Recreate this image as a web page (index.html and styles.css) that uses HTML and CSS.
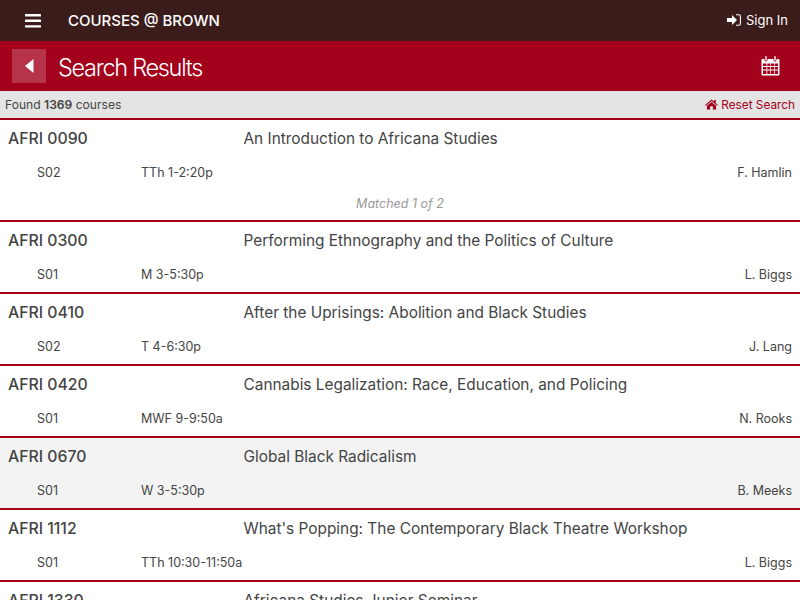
FILE: index.html
```html
<!DOCTYPE html>
<html lang="en">
<head>
<meta charset="utf-8">
<title>Courses @ Brown</title>
<link rel="stylesheet" href="styles.css">
</head>
<body>
<header class="topbar">
  <div class="brand">
    <svg class="burger" viewBox="0 0 16 14" width="16" height="14"><rect y="0" width="16" height="2.400" rx=".5"/><rect y="5.600" width="16" height="2.400" rx=".5"/><rect y="11.200" width="16" height="2.400" rx=".5"/></svg>
    <span class="title">COURSES @ BROWN</span>
  </div>
  <div class="signin">
    <svg viewBox="0 0 14 12" width="14" height="12"><path d="M0 4h5V1l5 5-5 5V8H0z" fill="#fff"/><path d="M9 .8h3a1.400 1.400 0 0 1 1.400 1.400v7.600A1.400 1.400 0 0 1 12 11.200H9" fill="none" stroke="#fff" stroke-width="1.100"/></svg>
    <span>Sign In</span>
  </div>
</header>
<section class="pagebar">
  <div class="pagebar-left">
    <div class="back"><svg viewBox="0 0 9 14" width="9" height="14"><path d="M8.500 0v14L0 7z" fill="#fff"/></svg></div>
    <h1>Search Results</h1>
  </div>
  <svg class="cal" viewBox="0 0 19 20" width="19" height="20"><path d="M1.500 3h16a1 1 0 0 1 1 1v14.500a1 1 0 0 1-1 1h-16a1 1 0 0 1-1-1V4a1 1 0 0 1 1-1z" fill="#fff"/><g fill="#a3001b"><rect x="2" y="7.500" width="3.500" height="2.500"/><rect x="6.300" y="7.500" width="3" height="2.500"/><rect x="10" y="7.500" width="3" height="2.500"/><rect x="13.700" y="7.500" width="3.300" height="2.500"/><rect x="2" y="11" width="3.500" height="2.500"/><rect x="6.300" y="11" width="3" height="2.500"/><rect x="10" y="11" width="3" height="2.500"/><rect x="13.700" y="11" width="3.300" height="2.500"/><rect x="2" y="14.500" width="3.500" height="3.500"/><rect x="6.300" y="14.500" width="3" height="3.500"/><rect x="10" y="14.500" width="3" height="3.500"/><rect x="13.700" y="14.500" width="3.300" height="3.500"/><rect x="3.500" y="1" width="3" height="4.500" rx="1.500"/><rect x="12.500" y="1" width="3" height="4.500" rx="1.500"/></g><rect x="4.300" y="0" width="1.400" height="4.800" rx=".7" fill="#fff"/><rect x="13.300" y="0" width="1.400" height="4.800" rx=".7" fill="#fff"/></svg>
</section>
<section class="found">
  <div>Found <b>1369</b> courses</div>
  <div class="reset">
    <svg viewBox="0 0 14 12" width="13" height="11"><path d="M7 .5 0 6.500l.8.9L7 2.200l6.200 5.200.8-.9-2.300-2V1H9.800v1.800z" fill="#a3001b"/><path d="M7 3.200 2 7.400V11.500h3.500V8h3v3.500H12V7.400z" fill="#a3001b"/></svg>
    <span>Reset Search</span>
  </div>
</section>
<main class="list">
  <article class="course">
    <div class="course-head"><div class="code">AFRI 0090</div><div class="name">An Introduction to Africana Studies</div></div>
    <div class="meta"><div class="sec">S02</div><div class="time">TTh 1-2:20p</div><div class="prof">F. Hamlin</div></div>
    <div class="matched">Matched 1 of 2</div>
  </article>
  <article class="course">
    <div class="course-head"><div class="code">AFRI 0300</div><div class="name">Performing Ethnography and the Politics of Culture</div></div>
    <div class="meta"><div class="sec">S01</div><div class="time">M 3-5:30p</div><div class="prof">L. Biggs</div></div>
  </article>
  <article class="course">
    <div class="course-head"><div class="code">AFRI 0410</div><div class="name">After the Uprisings: Abolition and Black Studies</div></div>
    <div class="meta"><div class="sec">S02</div><div class="time">T 4-6:30p</div><div class="prof">J. Lang</div></div>
  </article>
  <article class="course">
    <div class="course-head"><div class="code">AFRI 0420</div><div class="name">Cannabis Legalization: Race, Education, and Policing</div></div>
    <div class="meta"><div class="sec">S01</div><div class="time">MWF 9-9:50a</div><div class="prof">N. Rooks</div></div>
  </article>
  <article class="course alt">
    <div class="course-head"><div class="code">AFRI 0670</div><div class="name">Global Black Radicalism</div></div>
    <div class="meta"><div class="sec">S01</div><div class="time">W 3-5:30p</div><div class="prof">B. Meeks</div></div>
  </article>
  <article class="course">
    <div class="course-head"><div class="code">AFRI 1112</div><div class="name">What's Popping: The Contemporary Black Theatre Workshop</div></div>
    <div class="meta"><div class="sec">S01</div><div class="time">TTh 10:30-11:50a</div><div class="prof">L. Biggs</div></div>
  </article>
  <article class="course">
    <div class="course-head"><div class="code">AFRI 1330</div><div class="name">Africana Studies Junior Seminar</div></div>
  </article>
</main>
</body>
</html>
```
FILE: styles.css
```css
* { box-sizing: border-box; }
html, body { margin: 0; padding: 0; height: 600px; overflow: hidden; }
body { font-family: Inter, "Liberation Sans", sans-serif; color: #444; background: #fff; }
.topbar { height: 41px; background: #3a1d1b; color: #fff; display: flex; align-items: center; justify-content: space-between; padding: 0 12px 0 25px; }
.brand { display: flex; align-items: center; gap: 27px; }
.burger { fill: #fff; }
.title { font-size: 15px; font-weight: 500; }
.signin { display: flex; align-items: center; gap: 5px; font-size: 13px; font-weight: 400; padding-bottom: 1px; }
.pagebar { height: 50px; background: #a3001b; display: flex; align-items: center; justify-content: space-between; padding: 0 20px 0 12px; }
.pagebar-left { display: flex; align-items: center; gap: 12px; }
.back { width: 34px; height: 34px; background: #b63349; display: flex; align-items: center; justify-content: center; }
h1 { margin: 0; padding-top: 2px; font-size: 23.500px; font-weight: 300; letter-spacing: -1.300px; color: #fff; }
.found { height: 27px; background: #e4e4e4; display: flex; align-items: center; justify-content: space-between; padding: 0 5px; font-size: 12.100px; }
.found b { font-weight: 600; }
.reset { color: #a3001b; display: flex; align-items: center; gap: 3px; font-size: 11.800px; }
.list { border-top: 2px solid #a3001b; }
.course { border-bottom: 2px solid #a3001b; padding: 0 8px; height: 72px; }
.course:first-child { height: 102px; }
.alt { background: #f3f3f3; }
.course-head { display: flex; align-items: center; height: 36px; }
.code { width: 235.500px; font-size: 15.800px; font-weight: 500; }
.name { font-size: 15.400px; }
.meta { display: flex; align-items: center; height: 33px; font-size: 12.500px; }
.sec { width: 133px; padding-left: 29px; }
.time { flex: 1; }
.matched { text-align: center; font-size: 12.500px; font-style: italic; color: #999; margin-top: 6px; height: 18px; line-height: 18px; }
```
